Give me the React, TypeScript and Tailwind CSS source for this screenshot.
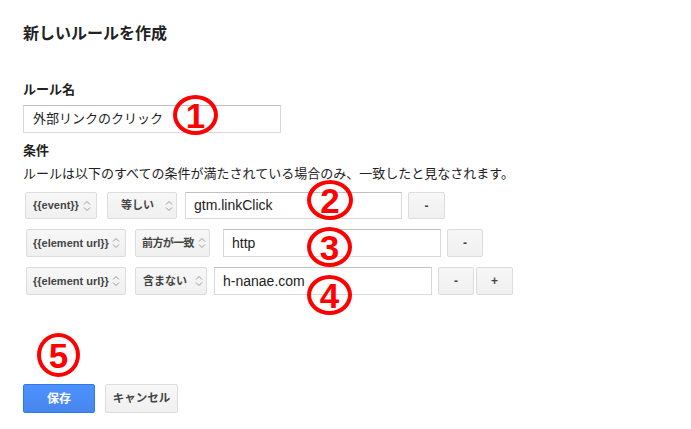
import React from 'react';

const font = "font-['Liberation_Sans','Noto_Sans_CJK_JP',sans-serif]";

const Chevrons: React.FC = () => (
  <svg width="8" height="12" viewBox="0 0 8 12" fill="none" stroke="#9a9a9a" strokeWidth="1" className="shrink-0">
    <path d="M1 4.5 L4 1.5 L7 4.5" />
    <path d="M1 7.5 L4 10.5 L7 7.5" />
  </svg>
);

interface SelectProps {
  label: string;
  width: string;
  pad: string;
  right: string;
  tight?: boolean;
}

const FakeSelect: React.FC<SelectProps> = ({ label, width, pad, right, tight }) => (
  <div
    className={`flex items-center h-full ${width} ${pad} ${right} border border-[#dcdcdc] rounded-[2px] bg-gradient-to-b from-[#f7f7f7] to-[#f0f0f0] text-[#444] font-bold text-[11px] whitespace-nowrap`}
  >
    <span className={tight ? 'tracking-[-0.6px]' : ''}>{label}</span>
    <span className="ml-auto">
      <Chevrons />
    </span>
  </div>
);

const GrayButton: React.FC<{ label: string; width: string }> = ({ label, width }) => (
  <div
    className={`flex items-center justify-center h-full ${width} border border-[#dcdcdc] rounded-[2px] bg-gradient-to-b from-[#f7f7f7] to-[#f0f0f0] text-[#444] font-bold text-[12px]`}
  >
    {label}
  </div>
);

const TextBox: React.FC<{ value: string; width: string }> = ({ value, width }) => (
  <div
    className={`flex items-center h-full ${width} border border-[#d9d9d9] border-t-[#c0c0c0] bg-white pl-[8px] text-[14px] text-[#222]`}
  >
    {value}
  </div>
);

// red hand-drawn style markers laid over the form
const Marker: React.FC<{ n: string; pos: string; size: string }> = ({ n, pos, size }) => (
  <div
    className={`absolute ${pos} ${size} flex items-center justify-center rounded-[50%] border-[4px] border-[#ff0000] text-[#ff0000] font-bold text-[35px] leading-none`}
  >
    <span className="mt-[1px]">{n}</span>
  </div>
);

export default function App() {
  return (
    <div className={`relative w-[691px] h-[429px] bg-white overflow-hidden ${font}`}>
      <div className="flex flex-col px-[23px]">
        <h1 className="mt-[24px] text-[16px] leading-[20px] font-bold text-[#222]">新しいルールを作成</h1>

        <div className="mt-[38px] text-[13px] leading-[16px] font-bold text-[#222]">ルール名</div>
        <div className="mt-[7px] h-[28px] flex">
          <div className="flex items-center w-[258px] h-full border border-[#d9d9d9] border-t-[#c0c0c0] pl-[9px] text-[13px] text-[#222]">
            外部リンクのクリック
          </div>
        </div>

        <div className="mt-[10px] text-[13px] leading-[16px] font-bold text-[#222]">条件</div>
        <div className="mt-[7px] text-[13px] leading-[16px] text-[#222] whitespace-nowrap">
          ルールは以下のすべての条件が満たされている場合のみ、一致したと見なされます。
        </div>

        <div className="mt-[10px] h-[27px] flex ml-[2px]">
          <FakeSelect label="{{event}}" width="w-[72px]" pad="pl-[7px]" right="pr-[5px]" />
          <div className="ml-[10px] h-full">
            <FakeSelect label="等しい" width="w-[70px]" pad="pl-[13px]" right="pr-[3px]" />
          </div>
          <div className="ml-[8px] h-full">
            <TextBox value="gtm.linkClick" width="w-[217px]" />
          </div>
          <div className="ml-[6px] h-full">
            <GrayButton label="-" width="w-[37px]" />
          </div>
        </div>

        <div className="mt-[10px] h-[28px] flex ml-[3px]">
          <FakeSelect label="{{element url}}" width="w-[100px]" pad="pl-[6px]" right="pr-[5px]" />
          <div className="ml-[9px] h-full">
            <FakeSelect label="前方が一致" width="w-[75px]" pad="pl-[6px]" right="pr-[3px]" tight />
          </div>
          <div className="ml-[13px] h-full">
            <TextBox value="http" width="w-[218px]" />
          </div>
          <div className="ml-[6px] h-full">
            <GrayButton label="-" width="w-[36px]" />
          </div>
        </div>

        <div className="mt-[10px] h-[28px] flex ml-[3px]">
          <FakeSelect label="{{element url}}" width="w-[100px]" pad="pl-[6px]" right="pr-[5px]" />
          <div className="ml-[9px] h-full">
            <FakeSelect label="含まない" width="w-[72px]" pad="pl-[7px]" right="pr-[3px]" />
          </div>
          <div className="ml-[7px] h-full">
            <TextBox value="h-nanae.com" width="w-[218px]" />
          </div>
          <div className="ml-[6px] h-full">
            <GrayButton label="-" width="w-[36px]" />
          </div>
          <div className="ml-[2px] h-full">
            <GrayButton label="+" width="w-[37px]" />
          </div>
        </div>

        <div className="mt-[89px] h-[29px] flex gap-[10px]">
          <div className="flex items-center justify-center w-[72px] h-full rounded-[2px] border border-[#3079ed] bg-gradient-to-b from-[#4d90fe] to-[#4787ed] text-white font-bold text-[12px]">
            保存
          </div>
          <div className="flex items-center justify-center w-[73px] h-full rounded-[2px] border border-[#dcdcdc] bg-gradient-to-b from-[#f7f7f7] to-[#f0f0f0] text-[#444] font-bold text-[11.5px]">
            キャンセル
          </div>
        </div>
      </div>

      <Marker n="1" pos="left-[173px] top-[95px]" size="w-[45px] h-[40px]" />
      <Marker n="2" pos="left-[307px] top-[180px]" size="w-[46px] h-[40px]" />
      <Marker n="3" pos="left-[307px] top-[227px]" size="w-[45px] h-[40px]" />
      <Marker n="4" pos="left-[307px] top-[275px]" size="w-[45px] h-[40px]" />
      <Marker n="5" pos="left-[37px] top-[333px]" size="w-[43px] h-[44px]" />
    </div>
  );
}
